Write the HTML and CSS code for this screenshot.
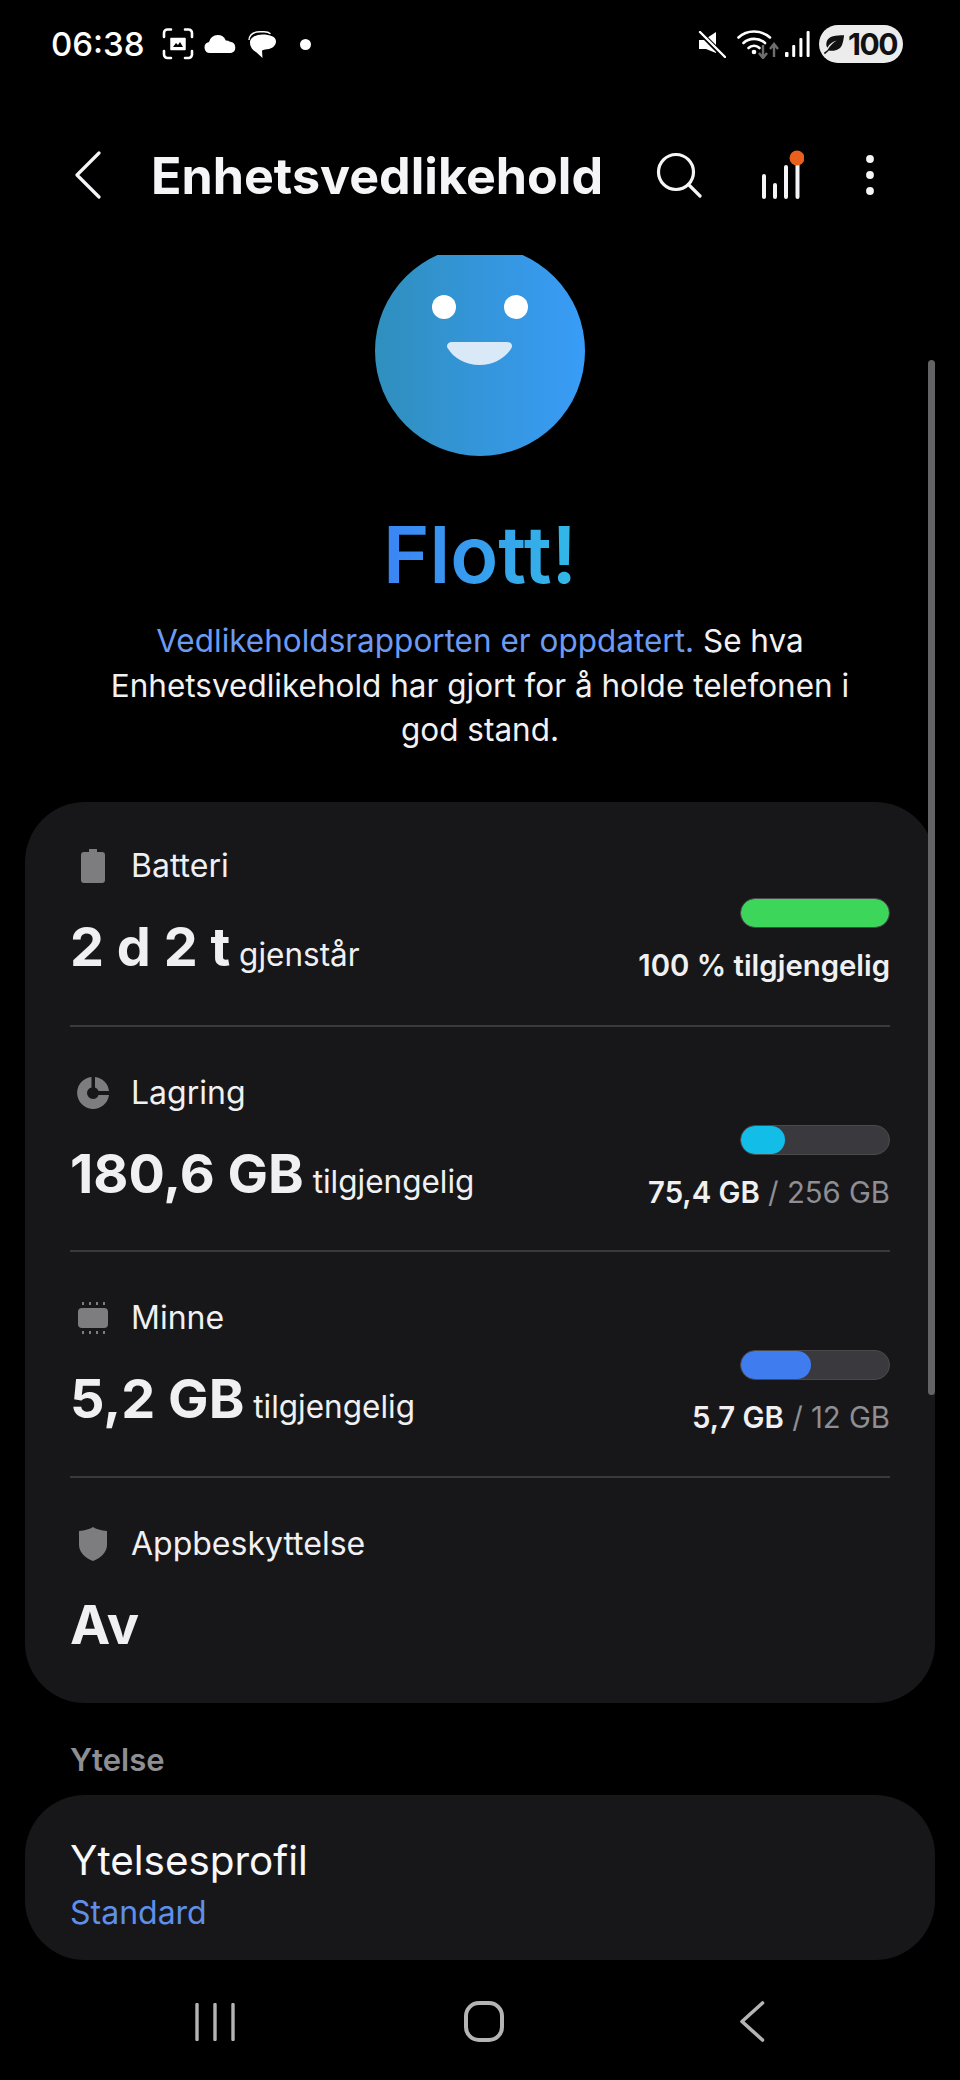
FILE: index.html
```html
<!DOCTYPE html>
<html lang="nb">
<head>
  <meta charset="UTF-8">
  <meta name="viewport" content="width=device-width, initial-scale=1.0">
  <title>Enhetsvedlikehold</title>
  <link rel="stylesheet" href="styles.css">
</head>
<body>
<div class="screen">

  <div class="status-bar">
    <div class="status-left">
      <span class="clock">06:38</span>
      <svg class="st-capture" width="32" height="32" viewBox="0 0 32 32" fill="none" stroke="#fff" stroke-width="2.6" stroke-linecap="round">
        <path d="M2 9V5a3.5 3.5 0 0 1 3.5-3.5H9M23 1.5h3.5A3.5 3.5 0 0 1 30 5v4M30 23v3.5a3.5 3.5 0 0 1-3.5 3.5H23M9 30H5.5A3.5 3.5 0 0 1 2 26.5V23"/>
        <path d="M9 10.5h14v11H9z" fill="#fff" stroke-width="1.5" stroke-linejoin="round"/>
        <path d="M11 19l3-4 2 2 2-3 3 5z" fill="#000" stroke="none"/>
      </svg>
      <svg class="st-cloud" width="32" height="18" viewBox="0 0 32 18" fill="#fff">
        <path d="M6 18a5.5 5.5 0 0 1-1-10.9A9 9 0 0 1 13.5 0a9 9 0 0 1 8.3 5.4A6.5 6.5 0 0 1 26 6.8 5.7 5.7 0 0 1 27 18z"/>
      </svg>
      <svg class="st-chat" width="28" height="27" viewBox="0 0 28 27" fill="#fff">
        <path d="M1 9C1.5 3 6 .8 12 .8h4c3 0 5 .6 6.5 2" fill="none" stroke="#fff" stroke-width="1.4"/>
        <path d="M14.5 3.5C22 3.5 28 5.5 28 10.5s-5.5 8-11 8l-3 1 .5 7.5L8 21c-3-1.5-6-5-6-9.5 0-5 6-8 12.5-8z"/>
      </svg>
      <span class="st-dot"></span>
    </div>
    <div class="status-right">
      <svg class="st-mute" width="28" height="27" viewBox="0 0 28 27">
        <path d="M1 9h6l2-1 9 9v5L8 18H1z" fill="#fff"/>
        <path d="M9 7l9-6v14z" fill="#fff"/>
        <path d="M2 1.5L26.5 26" stroke="#000" stroke-width="5"/>
        <path d="M2 1l25 25" stroke="#fff" stroke-width="2.4" stroke-linecap="round"/>
      </svg>
      <svg class="st-wifi" width="42" height="30" viewBox="0 0 42 30" fill="none">
        <path d="M1.5 8.5C10 .5 24 .5 33 8.5" stroke="#fff" stroke-width="2.6" stroke-linecap="round"/>
        <path d="M6.5 14C12 8.5 22 8.5 28 14" stroke="#fff" stroke-width="2.6" stroke-linecap="round"/>
        <path d="M11.5 19c3-3 8-3 11 0" stroke="#fff" stroke-width="2.6" stroke-linecap="round"/>
        <circle cx="17" cy="23" r="2.3" fill="#fff"/>
        <path d="M26 16v12M22 24l4 5 4-5" stroke="#6e6e6e" stroke-width="2.4"/>
        <path d="M37 28V16M33 20l4-5 4 5" stroke="#6e6e6e" stroke-width="2.4"/>
      </svg>
      <svg class="st-signal" width="25" height="26" viewBox="0 0 25 26" fill="#fff">
        <rect x="0" y="21" width="3.5" height="5" rx="1"/>
        <rect x="7.2" y="14" width="3" height="12" rx="1"/>
        <rect x="14.4" y="7" width="3" height="19" rx="1"/>
        <rect x="21.6" y="0" width="3" height="26" rx="1"/>
      </svg>
      <div class="battery-pill">
        <svg width="22" height="21" viewBox="0 0 24 22" fill="#111">
          <path d="M23 1C14 1 6 1.5 4 8c-.8 3-.3 5 .7 6.5C7 10 11 7.5 15 6.5 11 9 7.5 12 5 17l-4 3 1 1.5 4.5-4C12 18.5 18 17 20.5 12 22 8.5 22.5 5 23 1z"/>
        </svg>
        <span>100</span>
      </div>
    </div>
  </div>

  <div class="app-bar">
    <svg class="back-btn" width="26" height="48" viewBox="0 0 26 48" fill="none" stroke="#f5f5f7" stroke-width="3.2" stroke-linecap="round" stroke-linejoin="round">
      <path d="M24 2L2 24l22 22"/>
    </svg>
    <h1 class="app-title">Enhetsvedlikehold</h1>
    <div class="app-actions">
      <svg class="search-icon" width="46" height="46" viewBox="0 0 46 46" fill="none" stroke="#f5f5f7" stroke-width="3.2" stroke-linecap="round">
        <circle cx="20" cy="20" r="17.5"/>
        <path d="M32.5 32.5L44 44"/>
      </svg>
      <svg class="stats-icon" width="44" height="50" viewBox="0 0 44 50" fill="none" stroke="#f5f5f7" stroke-width="4" stroke-linecap="round">
        <path d="M4 26v21M15 35v12M26 17v30M37.5 10v37"/>
        <circle cx="37" cy="8" r="7.5" fill="#e8601c" stroke="none"/>
      </svg>
      <svg class="more-icon" width="8" height="40" viewBox="0 0 8 40" fill="#f5f5f7">
        <circle cx="4" cy="4" r="3.9"/>
        <circle cx="4" cy="20" r="3.9"/>
        <circle cx="4" cy="36" r="3.9"/>
      </svg>
    </div>
  </div>

  <div class="hero">
    <svg class="face" width="210" height="201" viewBox="0 9 210 201">
      <defs>
        <linearGradient id="faceFill" x1="0" y1="0" x2="1" y2="0">
          <stop offset="0" stop-color="#2f8fbd"/>
          <stop offset="1" stop-color="#399cf7"/>
        </linearGradient>
      </defs>
      <circle cx="105" cy="105" r="105" fill="url(#faceFill)"/>
      <circle cx="69" cy="61" r="12" fill="#fff"/>
      <circle cx="141" cy="61" r="12" fill="#fff"/>
      <path d="M77 96h55c4 0 6 3 4.5 6-6 10-18 17-32 17s-26-7-32-17c-1.5-3 .5-6 4.5-6z" fill="#d9e9f7"/>
    </svg>
    <div class="hero-title">Flott!</div>
    <p class="hero-text"><span class="link">Vedlikeholdsrapporten er oppdatert.</span> Se hva Enhetsvedlikehold har gjort for å holde telefonen i god stand.</p>
  </div>

  <div class="card stats-card">
    <div class="row">
      <div class="row-main">
        <div class="row-label">
          <span class="row-icon">
            <svg width="24" height="34" viewBox="0 0 24 34" fill="#7d7d7f"><path d="M8 0h8v3h5a3 3 0 0 1 3 3v25a3 3 0 0 1-3 3H3a3 3 0 0 1-3-3V6a3 3 0 0 1 3-3h5z"/></svg>
          </span>
          Batteri
        </div>
        <div class="row-value"><b>2 d 2 t</b> gjenstår</div>
      </div>
      <div class="row-side">
        <div class="bar"><div class="bar-fill green" style="width:100%"></div></div>
        <div class="side-text"><b>100 % tilgjengelig</b></div>
      </div>
    </div>

    <div class="row">
      <div class="row-main">
        <div class="row-label">
          <span class="row-icon">
            <svg width="32" height="32" viewBox="0 0 32 32" fill="#7d7d7f"><path d="M14.5 0v10.5A6 6 0 0 0 10 16a6 6 0 0 0 6 6 6 6 0 0 0 5.5-4H32A16 16 0 1 1 14.5 0z"/><path d="M18 0a16 16 0 0 1 14 14H21.5a6 6 0 0 0-3.5-3.5z"/></svg>
          </span>
          Lagring
        </div>
        <div class="row-value"><b>180,6 GB</b> tilgjengelig</div>
      </div>
      <div class="row-side">
        <div class="bar"><div class="bar-fill cyan" style="width:30%"></div></div>
        <div class="side-text"><b>75,4 GB</b> <span class="dim">/ 256 GB</span></div>
      </div>
    </div>

    <div class="row">
      <div class="row-main">
        <div class="row-label">
          <span class="row-icon">
            <svg width="30" height="32" viewBox="0 0 30 32" fill="#7d7d7f"><rect x="0" y="6" width="30" height="20" rx="4"/><path d="M4 0h2v3H4zM11 0h2v3h-2zM18 0h2v3h-2zM25 0h2v3h-2zM4 29h2v3H4zM11 29h2v3h-2zM18 29h2v3h-2zM25 29h2v3h-2z"/></svg>
          </span>
          Minne
        </div>
        <div class="row-value"><b>5,2 GB</b> tilgjengelig</div>
      </div>
      <div class="row-side">
        <div class="bar"><div class="bar-fill blue" style="width:47%"></div></div>
        <div class="side-text"><b>5,7 GB</b> <span class="dim">/ 12 GB</span></div>
      </div>
    </div>

    <div class="row">
      <div class="row-main">
        <div class="row-label">
          <span class="row-icon">
            <svg width="28" height="34" viewBox="0 0 28 34" fill="#7d7d7f"><path d="M14 0c3 2 8 3.5 14 4v14c0 7-6 13-14 16C6 31 0 25 0 18V4c6-.5 11-2 14-4z"/></svg>
          </span>
          Appbeskyttelse
        </div>
        <div class="row-value"><b>Av</b></div>
      </div>
    </div>
  </div>

  <div class="section-title">Ytelse</div>

  <div class="card profile-card">
    <div class="profile-name">Ytelsesprofil</div>
    <div class="profile-value">Standard</div>
  </div>

  <div class="scrollbar"></div>

  <div class="nav-bar">
    <svg width="40" height="38" viewBox="0 0 40 38" fill="none" stroke="#b4b4b4" stroke-width="3.4" stroke-linecap="round">
      <path d="M2 1.5v35M20 1.5v35M38 1.5v35"/>
    </svg>
    <svg width="40" height="41" viewBox="0 0 40 41" fill="none" stroke="#b4b4b4" stroke-width="4">
      <rect x="2" y="2" width="36" height="37" rx="13"/>
    </svg>
    <svg width="26" height="41" viewBox="0 0 26 41" fill="none" stroke="#b4b4b4" stroke-width="3.6" stroke-linecap="round" stroke-linejoin="round">
      <path d="M23.5 2L3 20.5l20.5 18.5" />
    </svg>
  </div>

</div>
</body>
</html>
```

FILE: styles.css
```css
* {
  box-sizing: border-box;
}
body {
  margin: 0;
  background-color: #000;
  color: #f5f5f7;
  font-family: 'Inter', 'Roboto', sans-serif;
}
svg {
  display: block;
  flex-shrink: 0;
}
.screen {
  position: relative;
  width: 960px;
  height: 2080px;
  overflow: hidden;
  background-color: #000;
}

/* status bar */
.status-bar {
  display: flex;
  justify-content: space-between;
  align-items: center;
  height: 88px;
  padding: 0 57px 0 51px;
}
.status-left,
.status-right {
  display: flex;
  align-items: center;
}
.clock {
  font-size: 33px;
  font-weight: 500;
  color: #fff;
  margin-right: 17px;
}
.st-cloud {
  margin-left: 10px;
}
.st-chat {
  margin-left: 12px;
}
.st-dot {
  width: 11px;
  height: 11px;
  margin-left: 24px;
  border-radius: 50%;
  background-color: #fff;
}
.st-wifi {
  margin-left: 11px;
}
.st-signal {
  margin-left: 6px;
}
.battery-pill {
  display: flex;
  align-items: center;
  gap: 3px;
  width: 84px;
  height: 38px;
  margin-left: 9px;
  padding-left: 4px;
  border-radius: 19px;
  background-color: #ececec;
  color: #111;
  font-size: 30px;
  font-weight: 700;
  letter-spacing: -1.5px;
}

/* app bar */
.app-bar {
  display: flex;
  align-items: center;
  height: 167px;
  padding: 7px 0 0 75px;
}
.app-title {
  margin: 0 0 0 50px;
  font-size: 50.2px;
  font-weight: 700;
  white-space: nowrap;
}
.app-actions {
  display: flex;
  align-items: center;
  margin-left: 53px;
}
.stats-icon {
  margin-left: 58px;
}
.more-icon {
  margin-left: 62px;
}

/* hero */
.hero {
  display: flex;
  flex-direction: column;
  align-items: center;
}
.hero-title {
  margin-top: 52px;
  font-size: 79px;
  line-height: 92px;
  font-weight: 600;
  background: linear-gradient(to right, #3b84f5, #32b9e6);
  -webkit-background-clip: text;
  background-clip: text;
  color: transparent;
}
.hero-text {
  width: 790px;
  margin: 19px 0 0;
  font-size: 31.5px;
  line-height: 44.5px;
  text-align: center;
  color: #f2f2f4;
}
.link {
  color: #6d9bf3;
}

/* cards */
.card {
  margin: 0 25px;
  background-color: #17171a;
}
.stats-card {
  margin-top: 49px;
  padding: 0 45px;
  border-radius: 60px;
}
.row {
  display: flex;
  justify-content: space-between;
  align-items: flex-start;
  height: 225px;
  padding-top: 48px;
  border-bottom: 2px solid #3a3a3d;
}
.row:first-child {
  height: 225px;
  padding-top: 46px;
}
.row:nth-child(3) {
  height: 226px;
}
.row:last-child {
  height: 225px;
  border-bottom: 0;
}
.row-label {
  display: flex;
  align-items: center;
  height: 36px;
  font-size: 32px;
  color: #f0f0f2;
}
.row-icon {
  display: flex;
  justify-content: center;
  width: 46px;
  margin-right: 15px;
}
.row-value {
  margin-top: 30px;
  font-size: 31.5px;
  line-height: 66px;
  color: #f0f0f2;
}
.row-value b {
  font-size: 54px;
  font-weight: 700;
}
.row-side {
  display: flex;
  flex-direction: column;
  align-items: flex-end;
  padding-top: 50px;
}
.bar {
  width: 150px;
  height: 30px;
  overflow: hidden;
  border: 1px solid #4a4a4d;
  border-radius: 15px;
  background-color: #3a3a3e;
}
.bar-fill {
  height: 100%;
  border-radius: 15px;
}
.green {
  background-color: #3cd75a;
}
.cyan {
  background-color: #12bde8;
}
.blue {
  background-color: #3f7cf0;
}
.side-text {
  margin-top: 20px;
  font-size: 29.3px;
  line-height: 36px;
  color: #8e8e93;
  white-space: nowrap;
}
.side-text b {
  font-weight: 600;
  color: #f0f0f2;
}
.section-title {
  margin: 39px 0 0 70px;
  font-size: 31px;
  line-height: 36px;
  font-weight: 600;
  color: #8e8e93;
}
.profile-card {
  height: 165px;
  margin-top: 17px;
  padding: 42px 45px 0;
  border-radius: 60px;
}
.profile-name {
  font-size: 40.4px;
  line-height: 48px;
  color: #f8f8fa;
}
.profile-value {
  margin-top: 9px;
  font-size: 32px;
  line-height: 38px;
  color: #5f8fe8;
}

/* overlays */
.scrollbar {
  position: absolute;
  top: 360px;
  left: 928px;
  width: 7px;
  height: 1035px;
  border-radius: 4px;
  background-color: #636366;
}
.nav-bar {
  display: flex;
  align-items: center;
  position: absolute;
  left: 0;
  right: 0;
  top: 2001px;
  padding-left: 195px;
}
.nav-bar svg:nth-child(2) {
  margin-left: 229px;
}
.nav-bar svg:nth-child(3) {
  margin-left: 235px;
}
```
